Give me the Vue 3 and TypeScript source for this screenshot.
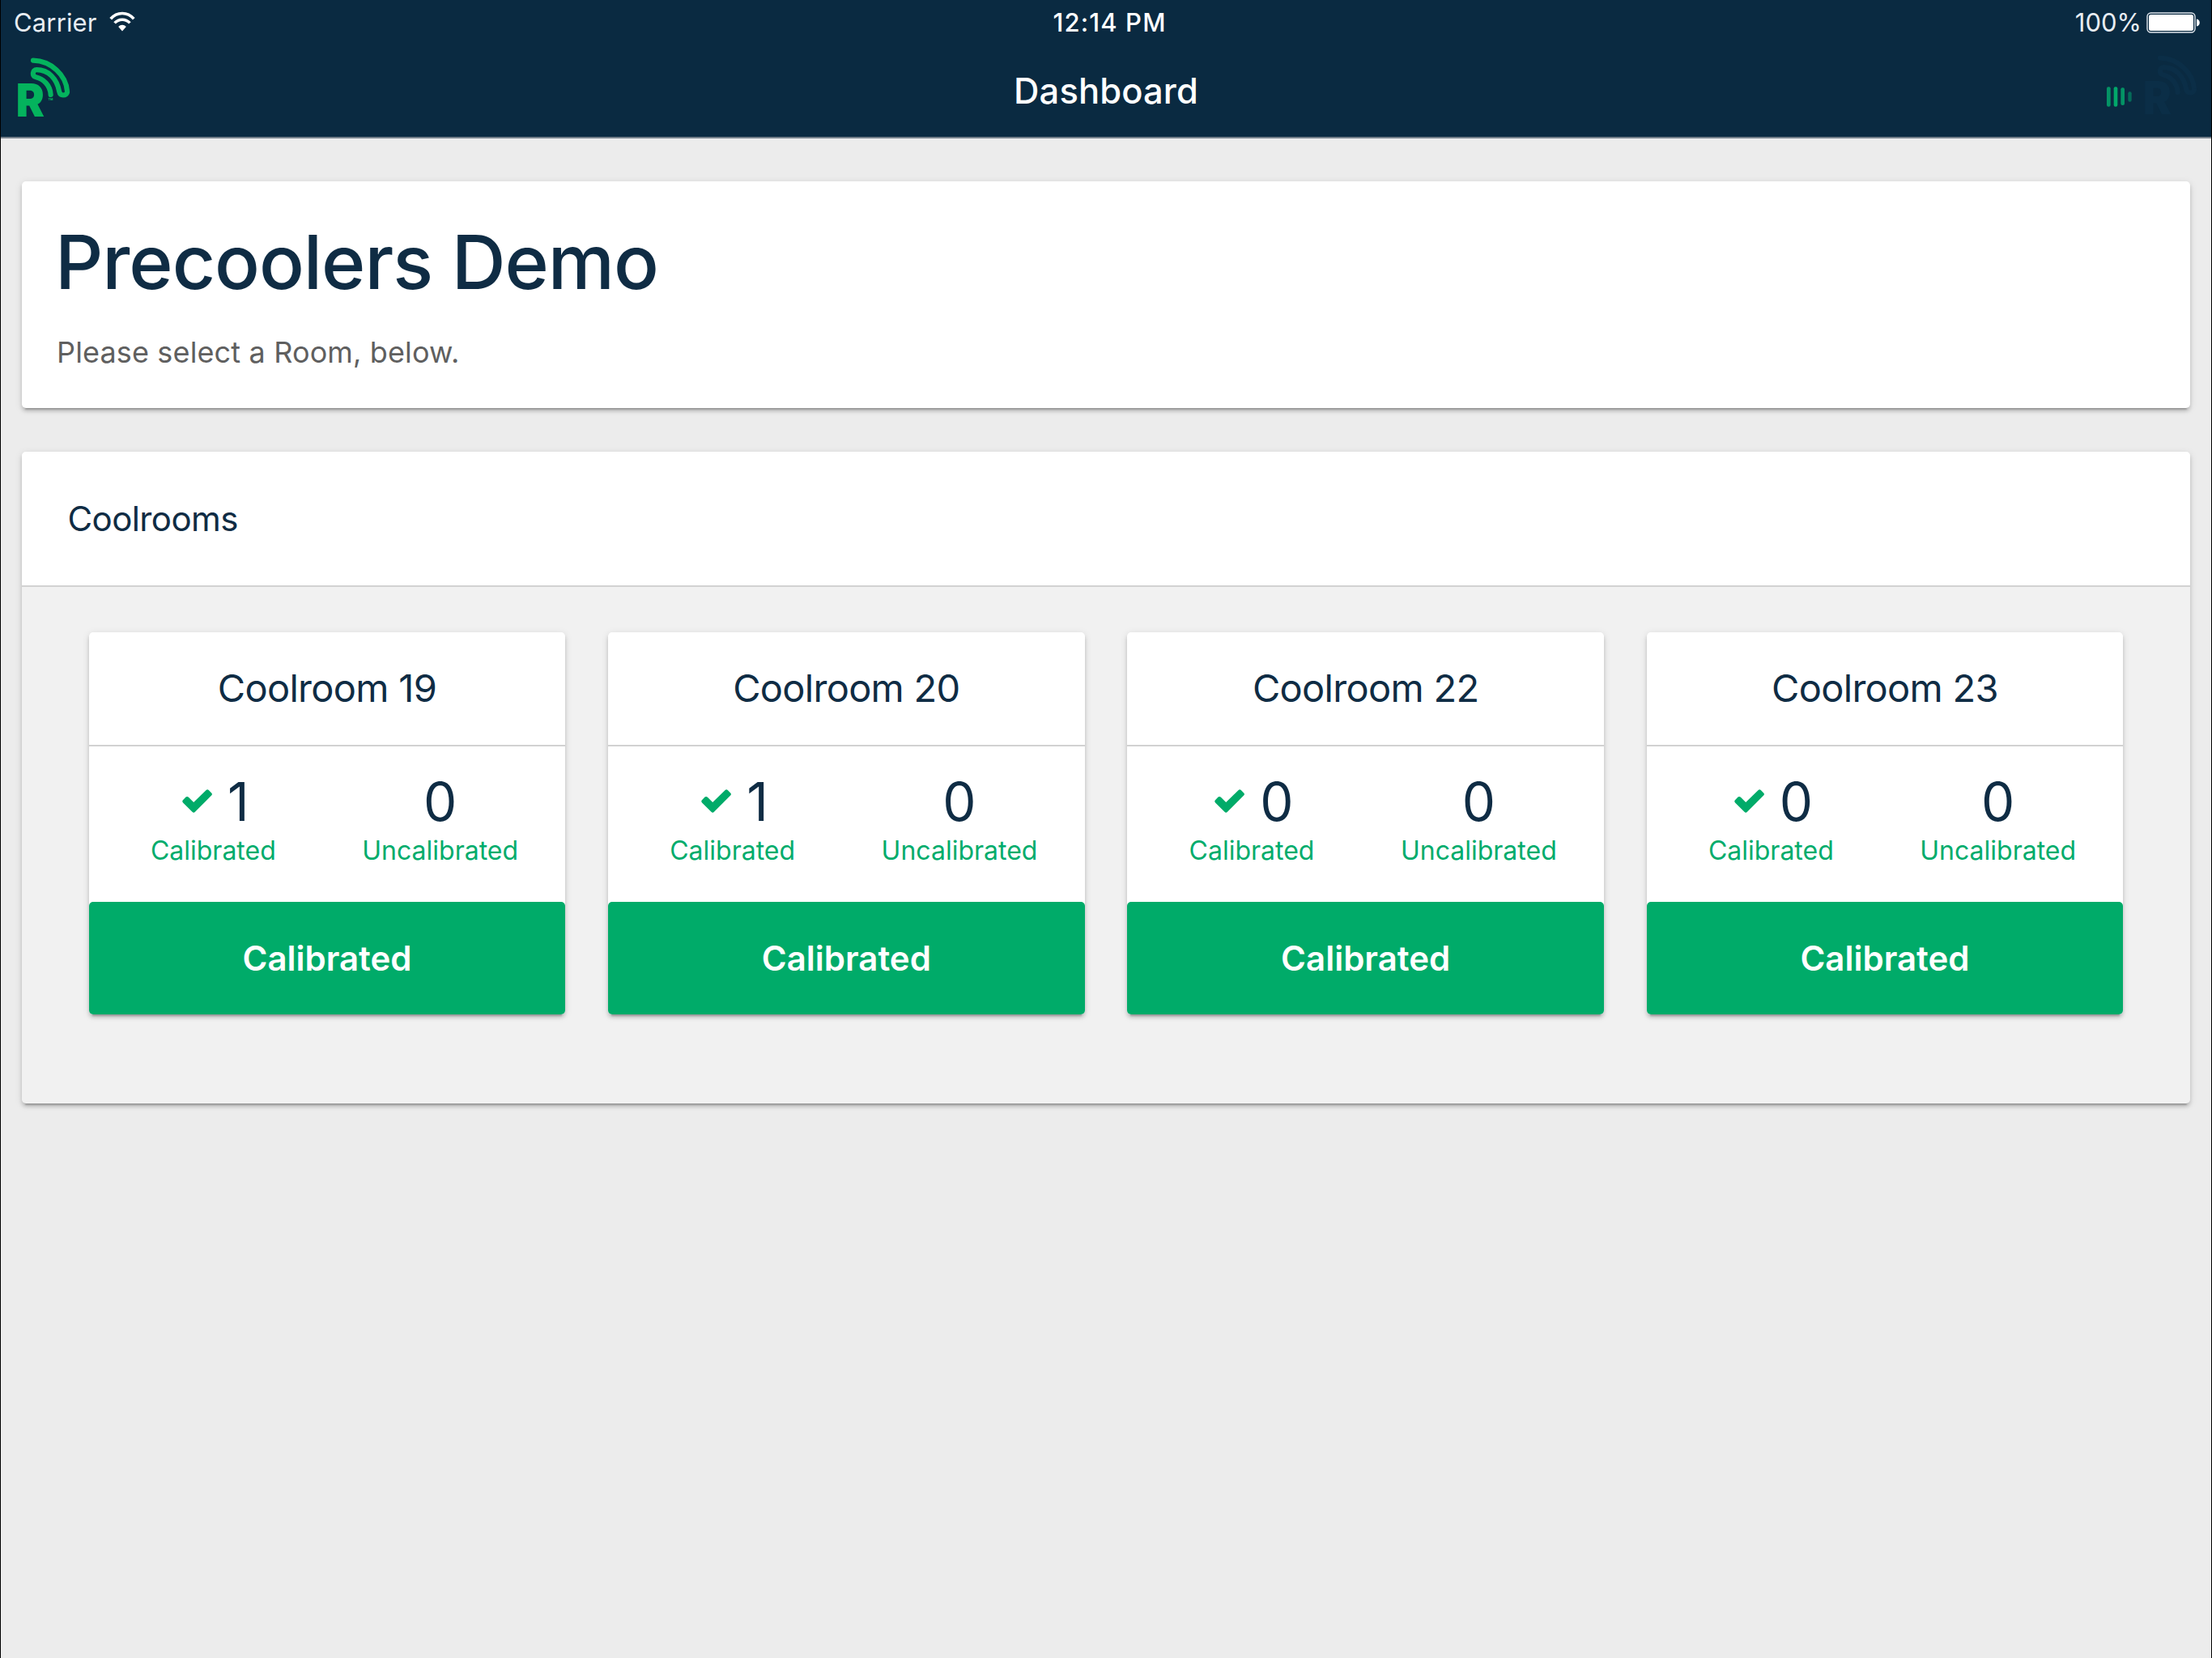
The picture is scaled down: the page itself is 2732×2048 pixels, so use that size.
<script setup lang="ts">
interface Room {
  name: string
  calibrated: number
  uncalibrated: number
}

const rooms: Room[] = [
  { name: 'Coolroom 19', calibrated: 1, uncalibrated: 0 },
  { name: 'Coolroom 20', calibrated: 1, uncalibrated: 0 },
  { name: 'Coolroom 22', calibrated: 0, uncalibrated: 0 },
  { name: 'Coolroom 23', calibrated: 0, uncalibrated: 0 },
]

const logoPath =
  'M60 20C127 22 182 74 186 134C187 144 179 148.5 171 148.5C163 148.5 158 143 156.5 135C148 87 116 54.5 73 54.5C56 54.5 55 79 70 82C97 88 123 111 125 147'
</script>

<template>
  <div class="device">
    <header class="header">
      <div class="status">
        <div class="side">
          <span class="carrier">Carrier</span>
          <svg class="wifi" viewBox="0 0 32 24" width="32" height="24">
            <path d="M1.7 8.2C9.6-.8 22.4-.8 30.3 8.2" fill="none" stroke="#fff" stroke-width="3.6" />
            <path d="M6.6 13.4C11.8 7.8 20.2 7.8 25.4 13.4" fill="none" stroke="#fff" stroke-width="3.6" />
            <path d="M11.2 18C14 15 18 15 20.8 18L16 23.6Z" fill="#fff" />
          </svg>
        </div>
        <span class="time">12:14 PM</span>
        <div class="side right">
          <span class="percent">100%</span>
          <svg class="battery" viewBox="0 0 67 26" width="67" height="26">
            <rect x="1" y="1" width="59" height="24" rx="4.5" fill="none" stroke="#dfe5ec" stroke-width="1.4" />
            <rect x="3" y="3" width="55" height="20" rx="2.5" fill="#fff" />
            <path d="M62 8.5C67 9 67 17 62 17.5Z" fill="#fff" />
          </svg>
        </div>
      </div>
      <div class="navbar">
        <svg class="logo" viewBox="0 0 195 230" width="65" height="76.67">
          <path :d="logoPath" fill="none" stroke="#04b35d" stroke-width="18.5" stroke-linecap="round" />
          <text class="logo-r" transform="translate(-4 228.5) scale(.94 1)" fill="#04b35d">R</text>
          <text class="logo-tm" x="115" y="183" fill="#04b35d">™</text>
        </svg>
        <h1 class="nav-title">Dashboard</h1>
        <div class="nav-right">
          <svg class="bars" viewBox="0 0 96 75" width="32" height="25">
            <rect x="0" y="1" width="14" height="73" rx="6" fill="#049365" />
            <rect x="26" y="1" width="14" height="73" rx="6" fill="#02a76a" />
            <rect x="52" y="4" width="14" height="65" rx="6" fill="#049365" />
            <rect x="79" y="19" width="13" height="37" rx="6" fill="#056c59" />
          </svg>
          <svg class="logo ghost" viewBox="0 0 195 230" width="65" height="76.67">
            <path :d="logoPath" fill="none" stroke="#0b2e47" stroke-width="18.5" stroke-linecap="round" />
            <text class="logo-r" transform="translate(-4 228.5) scale(.94 1)" fill="#0b2e47">R</text>
          </svg>
        </div>
      </div>
    </header>

    <main class="content">
      <section class="card intro">
        <h2 class="site">Precoolers Demo</h2>
        <p class="hint">Please select a Room, below.</p>
      </section>

      <section class="card group">
        <div class="group-head">Coolrooms</div>
        <div class="rooms">
          <article v-for="room in rooms" :key="room.name" class="card room">
            <div class="room-name">{{ room.name }}</div>
            <div class="stats">
              <div class="stat">
                <div class="value checked">
                  <svg class="check" viewBox="0 0 37 29" width="37" height="29">
                    <path
                      d="M1 13.2L4.5 9.6Q6.2 8.2 7.9 9.7L14.2 16L29.6 1Q31.2-.4 32.8 1L36.2 4.4Q37.7 6 36.2 7.6L16 27.8Q14.2 29.6 12.4 27.8L1 16.4Q-.5 14.8 1 13.2Z"
                      fill="#00ab69"
                    />
                  </svg>
                  <span>{{ room.calibrated }}</span>
                </div>
                <div class="label">Calibrated</div>
              </div>
              <div class="stat">
                <div class="value"><span>{{ room.uncalibrated }}</span></div>
                <div class="label">Uncalibrated</div>
              </div>
            </div>
            <button class="action" type="button">Calibrated</button>
          </article>
        </div>
      </section>
    </main>
  </div>
</template>

<style>
body {
  margin: 0;
  background: #ececec;
}
</style>

<style scoped>
.device {
  box-sizing: border-box;
  width: 2732px;
  height: 2048px;
  border: solid #000;
  border-width: 0 1px;
  background: #ececec;
  color: #0f2c44;
  font-family: Inter, "Liberation Sans", sans-serif;
  overflow: hidden;
}
.header {
  box-sizing: border-box;
  height: 171px;
  background: #0a2a41;
  border-bottom: 2px solid #76818c;
  color: #fff;
}
.status {
  display: grid;
  grid-template-columns: 1fr auto 1fr;
  height: 55px;
  align-items: center;
  padding: 0 14px 0 16px;
  font-size: 31px;
  line-height: 55px;
  white-space: nowrap;
}
.side {
  display: flex;
  align-items: center;
}
.right {
  justify-content: flex-end;
}
.carrier,
.percent {
  color: #e8edf3;
}
.carrier {
  letter-spacing: 0.15px;
}
.wifi {
  margin: 0 0 1px 15px;
  overflow: visible;
}
.time {
  padding-left: 7px;
  font-weight: 500;
  letter-spacing: 1.15px;
}
.battery {
  margin: 0 -1px 0 6px;
}
.navbar {
  display: grid;
  grid-template-columns: 1fr auto 1fr;
  height: 114px;
}
.logo {
  margin: 13px 0 0 20px;
  overflow: visible;
}
.logo-r {
  font: 900 168px Inter, sans-serif;
}
.logo-tm {
  font: 700 30px Inter, sans-serif;
}
.nav-title {
  margin: 0;
  font-size: 43.5px;
  line-height: 114px;
  font-weight: 500;
  letter-spacing: 0.1px;
}
.nav-right {
  display: flex;
  justify-content: flex-end;
  align-items: flex-start;
  padding-right: 18px;
}
.bars {
  margin-top: 52px;
}
.ghost {
  margin: 10px 0 0 14px;
}
.content {
  padding: 53px 26px 0;
}
.card {
  border-radius: 5px;
  background: #fff;
  box-shadow: 0 4px 4px rgba(0, 0, 0, 0.14), 0 6px 2px -4px rgba(0, 0, 0, 0.2),
    0 2px 10px rgba(0, 0, 0, 0.12);
}
.intro {
  box-sizing: border-box;
  height: 280px;
  padding: 39px 43px 0;
}
.site {
  margin: 0 0 0 -2px;
  font-size: 92.6px;
  line-height: 120px;
  font-weight: 500;
  letter-spacing: -1.05px;
}
.hint {
  margin: 22px 0 0;
  font-size: 36px;
  line-height: 60px;
  letter-spacing: 0.14px;
  color: #5f5f5f;
}
.group {
  box-sizing: border-box;
  height: 805px;
  margin-top: 53.5px;
  background: #f1f1f1;
}
.group-head {
  height: 165px;
  border-bottom: 2px solid #d2d2d2;
  border-radius: 5px 5px 0 0;
  background: #fff;
  padding-left: 56.5px;
  font-size: 42px;
  line-height: 166px;
  letter-spacing: -0.6px;
}
.rooms {
  display: grid;
  grid-template-columns: repeat(4, 1fr);
  gap: 52.7px;
  padding: 56.5px 82.7px 0;
}
.room {
  height: 472px;
}
.room-name {
  height: 139px;
  border-bottom: 2px solid #d2d2d2;
  font-size: 47px;
  line-height: 137px;
  letter-spacing: -0.7px;
  text-align: center;
}
.stats {
  display: grid;
  grid-template-columns: 1fr 1fr;
  box-sizing: border-box;
  height: 192px;
  padding: 28px 13px 0;
}
.stat:last-child {
  margin-right: 2px;
}
.value {
  display: flex;
  justify-content: center;
  align-items: center;
  height: 81px;
  font-size: 65.5px;
  line-height: 81px;
}
.checked {
  padding-left: 6px;
}
.check {
  margin: 0 19px 3px 0;
}
.label {
  font-size: 32px;
  line-height: 40px;
  color: #00ac6c;
  text-align: center;
}
.action {
  display: block;
  width: 100%;
  height: 139px;
  padding: 1px 0 0;
  border: 0;
  border-radius: 5px;
  background: #00ab69;
  color: #fff;
  font: 600 42px/138px Inter, sans-serif;
}
</style>
